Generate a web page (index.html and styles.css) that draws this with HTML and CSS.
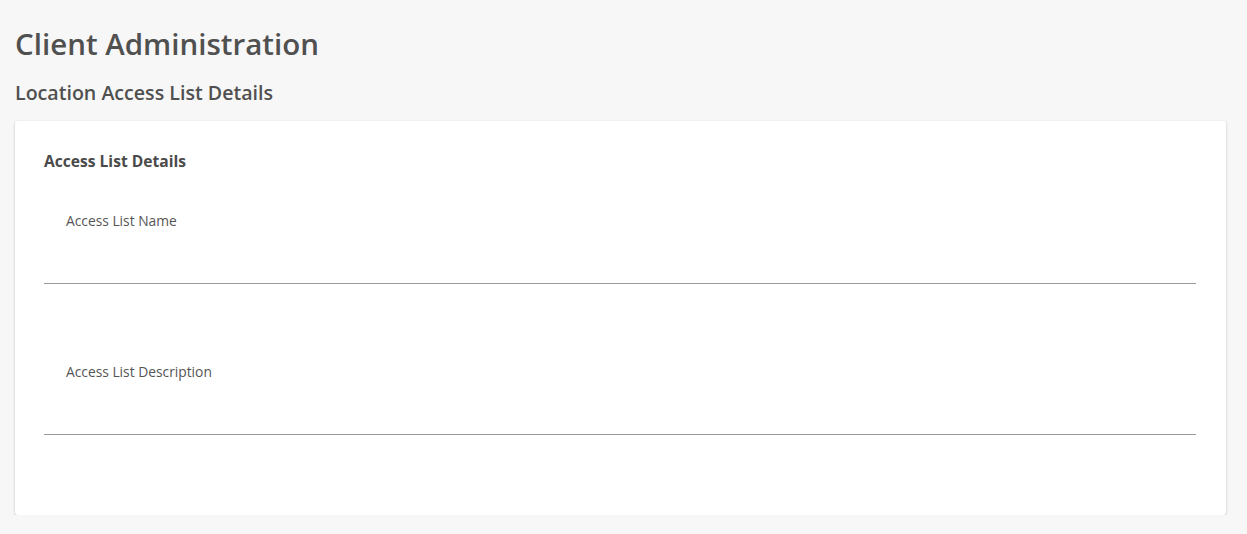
FILE: index.html
```html
<!DOCTYPE html>
<html lang="en">
<head>
<meta charset="utf-8">
<title>Client Administration</title>
<link rel="stylesheet" href="styles.css">
</head>
<body>
<div class="page">
  <h1 class="page-title">Client Administration</h1>
  <h2 class="page-subtitle">Location Access List Details</h2>
  <section class="card">
    <h3 class="card-title">Access List Details</h3>
    <div class="field">
      <label class="field-label">Access List Name</label>
      <div class="field-input"></div>
    </div>
    <div class="field">
      <label class="field-label">Access List Description</label>
      <div class="field-input"></div>
    </div>
  </section>
</div>
</body>
</html>
```

FILE: styles.css
```css
* { box-sizing: border-box; }
html, body {
  margin: 0;
  padding: 0;
  background: #f7f7f7;
  font-family: "Open Sans", "Noto Sans", sans-serif;
  color: #4f4f4f;
}
.page {
  padding: 22px 21px 0 15px;
}
.page-title {
  margin: 0;
  font-size: 29.5px;
  font-weight: 600;
  line-height: 44px;
  color: #505050;
}
.page-subtitle {
  margin: 13px 0 0 0;
  font-size: 19.6px;
  font-weight: 600;
  line-height: 28px;
  color: #505050;
}
.card {
  margin-top: 14px;
  height: 394px;
  background: #fff;
  border-radius: 3px;
  box-shadow: 0 1px 3px rgba(0,0,0,0.22);
  padding: 28px 30px 0 29px;
}
.card-title {
  margin: 0;
  font-size: 15.6px;
  font-weight: 700;
  line-height: 24px;
  color: #4a4a4a;
}
.field {
  display: flex;
  flex-direction: column;
}
.field + .field { margin-top: 40px; }
.field-label {
  margin-top: 38px;
  padding-left: 22px;
  font-size: 13.8px;
  line-height: 20px;
  color: #555;
}
.field-input {
  margin-top: 52px;
  height: 1px;
  background: #9a9a9a;
}
```
